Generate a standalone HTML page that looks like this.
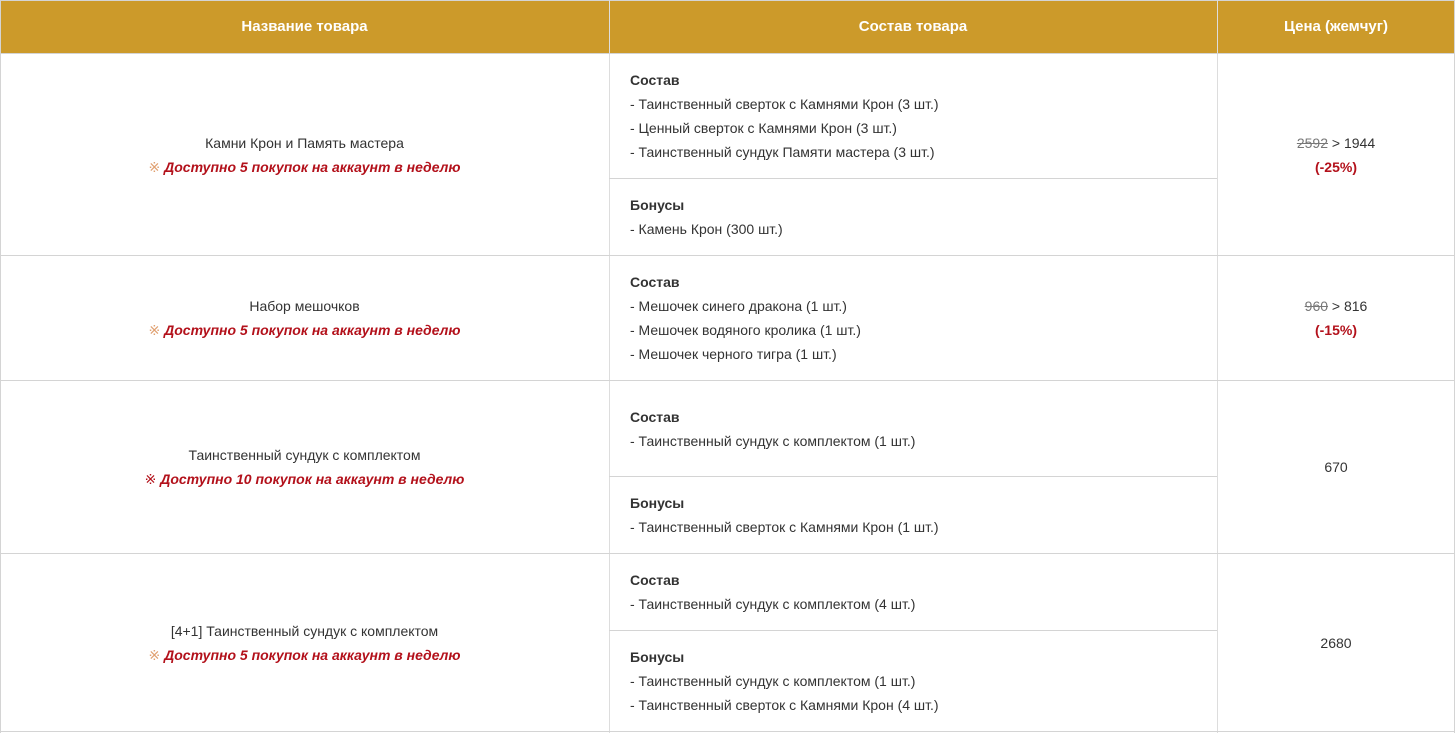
<!DOCTYPE html>
<html><head><meta charset="utf-8"><style>
body{margin:0;width:1456px;height:733px;background:#fff;font-family:"Liberation Sans",Arial,sans-serif;font-size:14px;color:#333;position:relative;overflow:hidden}
.l{position:absolute;background:#d4d4d4}
.h{position:absolute;top:0;height:53px;line-height:53px;color:#fff;font-weight:bold;text-align:center;font-size:15px}
.t{position:absolute;line-height:24px;white-space:nowrap}
.c{text-align:center}
.r{color:#b3111b;font-weight:bold;font-style:italic}
.m{color:#e0a070;font-style:normal;font-weight:normal}
.b{font-weight:bold}
.p{color:#b3111b;font-weight:bold}
s{color:#777}
</style></head><body>
<div style="position:absolute;left:0;top:0;width:1455px;height:53px;background:#cc9a2a"></div>
<div class="h" style="left:0;width:609px">Название товара</div>
<div class="h" style="left:609px;width:608px">Состав товара</div>
<div class="h" style="left:1217px;width:238px">Цена (жемчуг)</div>
<div class="l" style="left:0;top:0;width:1455px;height:1px"></div>
<div class="l" style="left:0;top:0;width:1px;height:733px"></div>
<div class="l" style="left:1454px;top:0;width:1px;height:733px"></div>
<div class="l" style="left:609px;top:0;width:1px;height:733px;background:#ddd"></div>
<div class="l" style="left:1217px;top:0;width:1px;height:733px;background:#ddd"></div>
<div class="l" style="left:0;top:53px;width:1455px;height:1px"></div>
<div class="l" style="left:609px;top:178px;width:608px;height:1px"></div>
<div class="l" style="left:0;top:255px;width:1455px;height:1px"></div>
<div class="l" style="left:0;top:380px;width:1455px;height:1px"></div>
<div class="l" style="left:609px;top:476px;width:608px;height:1px"></div>
<div class="l" style="left:0;top:553px;width:1455px;height:1px"></div>
<div class="l" style="left:609px;top:630px;width:608px;height:1px"></div>
<div class="l" style="left:0;top:731px;width:1455px;height:1px"></div>

<div class="t c" style="left:0;width:609px;top:131px">Камни Крон и Память мастера<br><span class="r"><span class="m">※</span> Доступно 5 покупок на аккаунт в неделю</span></div>
<div class="t" style="left:630px;top:68px"><span class="b">Состав</span><br>- Таинственный сверток с Камнями Крон (3 шт.)<br>- Ценный сверток с Камнями Крон (3 шт.)<br>- Таинственный сундук Памяти мастера (3 шт.)</div>
<div class="t" style="left:630px;top:193px"><span class="b">Бонусы</span><br>- Камень Крон (300 шт.)</div>
<div class="t c" style="left:1217px;width:238px;top:131px"><s>2592</s> &gt; 1944<br><span class="p">(-25%)</span></div>

<div class="t c" style="left:0;width:609px;top:294px">Набор мешочков<br><span class="r"><span class="m">※</span> Доступно 5 покупок на аккаунт в неделю</span></div>
<div class="t" style="left:630px;top:270px"><span class="b">Состав</span><br>- Мешочек синего дракона (1 шт.)<br>- Мешочек водяного кролика (1 шт.)<br>- Мешочек черного тигра (1 шт.)</div>
<div class="t c" style="left:1217px;width:238px;top:294px"><s>960</s> &gt; 816<br><span class="p">(-15%)</span></div>

<div class="t c" style="left:0;width:609px;top:443px">Таинственный сундук с комплектом<br><span class="r"><span class="m" style="color:#b3111b">※</span> Доступно 10 покупок на аккаунт в неделю</span></div>
<div class="t" style="left:630px;top:405px"><span class="b">Состав</span><br>- Таинственный сундук с комплектом (1 шт.)</div>
<div class="t" style="left:630px;top:491px"><span class="b">Бонусы</span><br>- Таинственный сверток с Камнями Крон (1 шт.)</div>
<div class="t c" style="left:1217px;width:238px;top:455px">670</div>

<div class="t c" style="left:0;width:609px;top:619px">[4+1] Таинственный сундук с комплектом<br><span class="r"><span class="m">※</span> Доступно 5 покупок на аккаунт в неделю</span></div>
<div class="t" style="left:630px;top:568px"><span class="b">Состав</span><br>- Таинственный сундук с комплектом (4 шт.)</div>
<div class="t" style="left:630px;top:645px"><span class="b">Бонусы</span><br>- Таинственный сундук с комплектом (1 шт.)<br>- Таинственный сверток с Камнями Крон (4 шт.)</div>
<div class="t c" style="left:1217px;width:238px;top:631px">2680</div>
</body></html>
